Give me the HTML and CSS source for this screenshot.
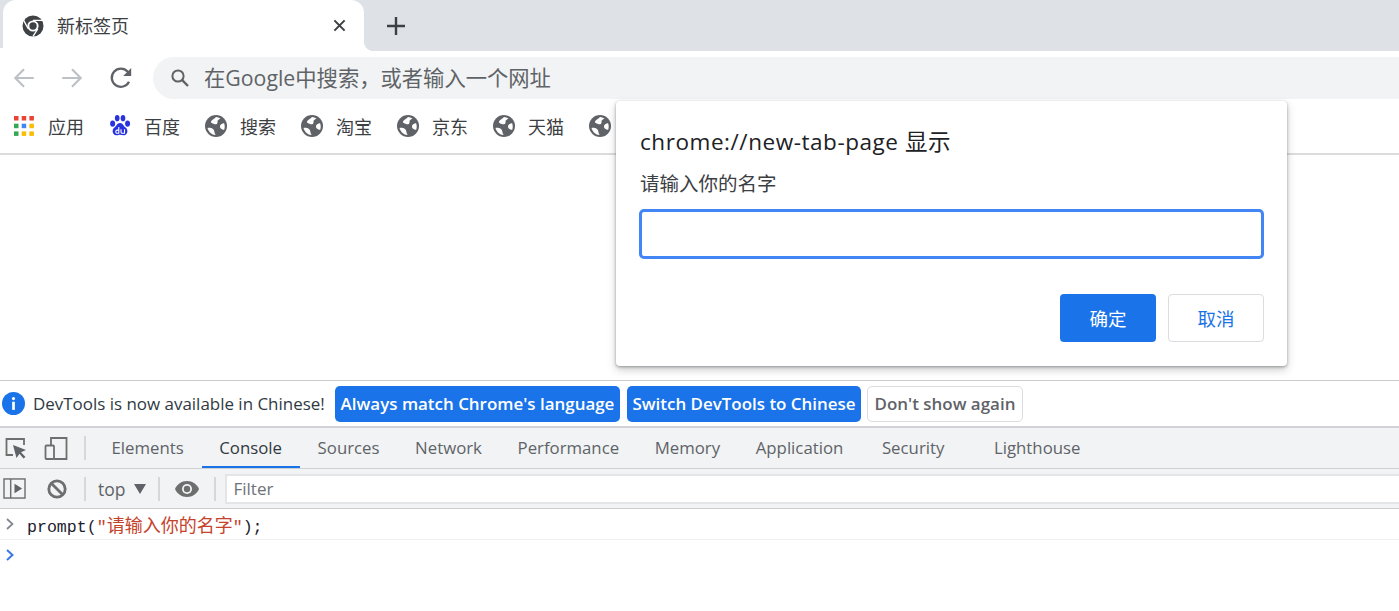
FILE: index.html
```html
<!DOCTYPE html>
<html lang="zh">
<head>
<meta charset="utf-8">
<title>新标签页</title>
<link rel="stylesheet" href="styles.css">
</head>
<body>
<div class="browser">
  <header class="tabstrip">
    <div class="tab">
      <svg class="tab-icon" viewBox="0 0 22 22"><circle cx="11" cy="11" r="10.5" fill="#3f4245"/><circle cx="11" cy="11" r="5.6" fill="#fff"/><circle cx="11" cy="11" r="3.7" fill="#3f4245"/><path d="M11 5.4H20.2M6.2 13.8 1.8 5.6M15.8 13.8 11 21.4" stroke="#fff" stroke-width="1.3" fill="none"/></svg>
      <span class="tab-title">新标签页</span>
      <svg class="tab-close" viewBox="0 0 14 14"><path d="M1.5 1.5 12.5 12.5M12.5 1.5 1.5 12.5" stroke="#3c4043" stroke-width="2.2" fill="none"/></svg>
    </div>
    <svg class="new-tab" viewBox="0 0 18 18"><path d="M9 0V18M0 9H18" stroke="#3c4043" stroke-width="2.4" fill="none"/></svg>
  </header>

  <div class="toolbar">
    <svg class="nav-icon" viewBox="0 0 24 24"><path d="M21 12H4M12 4 4 12 12 20" stroke="#bdc1c6" stroke-width="2" fill="none"/></svg>
    <svg class="nav-icon" viewBox="0 0 24 24"><path d="M3 12H20M12 4 20 12 12 20" stroke="#bdc1c6" stroke-width="2" fill="none"/></svg>
    <svg class="nav-icon nav-reload" viewBox="0 0 24 24"><path d="M19.400 15.500A8.400 8.400 0 1 1 18.200 6.200L20.600 8.600" stroke="#5f6368" stroke-width="2.100" fill="none"/><path d="M21.400 2.800V10.200H14Z" fill="#5f6368"/></svg>
    <div class="omnibox">
      <svg class="search-icon" viewBox="0 0 20 20"><circle cx="8" cy="8" r="5.6" stroke="#5f6368" stroke-width="2" fill="none"/><path d="M12.2 12.2 18 18" stroke="#5f6368" stroke-width="2.4" fill="none"/></svg>
      <span class="omni-text">在Google中搜索，或者输入一个网址</span>
    </div>
  </div>

  <nav class="bookmarks">
    <div class="bookmark bookmark-apps">
      <svg class="bm-icon" viewBox="0 0 20 20">
        <rect x="0" y="0" width="4.5" height="4.5" fill="#ea4335"/><rect x="7.7" y="0" width="4.5" height="4.5" fill="#ea4335"/><rect x="15.4" y="0" width="4.5" height="4.5" fill="#ea4335"/>
        <rect x="0" y="7.7" width="4.5" height="4.5" fill="#34a853"/><rect x="7.7" y="7.7" width="4.5" height="4.5" fill="#4285f4"/><rect x="15.4" y="7.7" width="4.5" height="4.5" fill="#fbbc04"/>
        <rect x="0" y="15.4" width="4.5" height="4.5" fill="#34a853"/><rect x="7.7" y="15.4" width="4.5" height="4.5" fill="#fbbc04"/><rect x="15.4" y="15.4" width="4.5" height="4.5" fill="#fbbc04"/>
      </svg>
      <span>应用</span>
    </div>
    <div class="bookmark bookmark-baidu">
      <svg class="bm-icon" viewBox="0 0 20 22">
        <ellipse cx="2.6" cy="8.6" rx="2.5" ry="3.2" fill="#2932e1"/><ellipse cx="7.2" cy="3.2" rx="2.3" ry="3.1" fill="#2932e1"/><ellipse cx="13" cy="3.2" rx="2.3" ry="3.1" fill="#2932e1"/><ellipse cx="17.6" cy="8.6" rx="2.5" ry="3.2" fill="#2932e1"/>
        <path d="M10 8C7 8 6.6 11 4.4 12.6 2 14.400 1.800 19.500 5.800 20.200 7.700 20.500 8.500 19.800 10 19.800 11.500 19.800 12.500 20.500 14.400 20.200 18.400 19.500 18 14.400 15.600 12.600 13.400 11 13 8 10 8Z" fill="#2932e1"/>
        <path d="M8.800 12V18.400M8.800 15.100H7.200Q5.800 15.100 5.800 16.700T7.200 18.300H8.800M11 14.200V17Q11 18.300 12.400 18.300H14.500V14.200" stroke="#fff" stroke-width="1.100" fill="none"/>
      </svg>
      <span>百度</span>
    </div>
    <div class="bookmark">
      <svg class="bm-icon" viewBox="0 0 22 22"><use href="#globe"/></svg>
      <span>搜索</span>
    </div>
    <div class="bookmark">
      <svg class="bm-icon" viewBox="0 0 22 22"><use href="#globe"/></svg>
      <span>淘宝</span>
    </div>
    <div class="bookmark">
      <svg class="bm-icon" viewBox="0 0 22 22"><use href="#globe"/></svg>
      <span>京东</span>
    </div>
    <div class="bookmark">
      <svg class="bm-icon" viewBox="0 0 22 22"><use href="#globe"/></svg>
      <span>天猫</span>
    </div>
    <div class="bookmark">
      <svg class="bm-icon" viewBox="0 0 22 22"><use href="#globe"/></svg>
    </div>
  </nav>

  <main class="page"></main>

  <section class="devtools">
    <div class="infobar">
      <svg class="info-icon" viewBox="0 0 22 22"><circle cx="11" cy="11" r="11" fill="#1a73e8"/><circle cx="11" cy="6.300" r="1.500" fill="#fff"/><rect x="9.700" y="9.300" width="2.600" height="7.800" fill="#fff"/></svg>
      <span class="info-text">DevTools is now available in Chinese!</span>
      <button class="dt-btn dt-primary dt-match">Always match Chrome's language</button>
      <button class="dt-btn dt-primary dt-switch">Switch DevTools to Chinese</button>
      <button class="dt-btn dt-plain">Don't show again</button>
    </div>

    <div class="dt-tabs">
      <svg class="dt-tool" viewBox="0 0 22 22"><path d="M8 18H1.500V2H19V8" stroke="#6e6e6e" stroke-width="1.800" fill="none"/><path d="M8 8 21 13 16 15.200 20.500 20 18.500 21.500 14.500 16.800 11.500 21Z" fill="#5f6368"/></svg>
      <svg class="dt-tool dt-device" viewBox="0 0 24 24"><path d="M7 9V2H22.500V23H10" stroke="#6e6e6e" stroke-width="1.800" fill="none"/><rect x="1.500" y="9.500" width="8.500" height="13.500" rx="1" stroke="#6e6e6e" stroke-width="1.800" fill="none"/></svg>
      <span class="dt-sep dt-sep-tabs"></span>
      <span class="dt-tab">Elements</span>
      <span class="dt-tab dt-tab-active">Console</span>
      <span class="dt-tab">Sources</span>
      <span class="dt-tab">Network</span>
      <span class="dt-tab">Performance</span>
      <span class="dt-tab">Memory</span>
      <span class="dt-tab">Application</span>
      <span class="dt-tab dt-tab-sec">Security</span>
      <span class="dt-tab dt-tab-last">Lighthouse</span>
    </div>

    <div class="con-bar">
      <svg class="con-side" viewBox="0 0 24 22"><rect x="1" y="1" width="22" height="20" stroke="#6e6e6e" stroke-width="1.500" fill="none"/><path d="M8 1V21" stroke="#6e6e6e" stroke-width="1.500"/><path d="M12 6 20 11 12 16Z" fill="#5f6368"/></svg>
      <svg class="con-clear" viewBox="0 0 20 20"><circle cx="10" cy="10" r="8.200" stroke="#6e6e6e" stroke-width="2.800" fill="none"/><path d="M4.200 4.200 15.800 15.800" stroke="#6e6e6e" stroke-width="2.800"/></svg>
      <span class="dt-sep"></span>
      <span class="con-top">top</span>
      <span class="con-caret"></span>
      <span class="dt-sep"></span>
      <svg class="con-eye" viewBox="0 0 24 16"><path d="M12 0C6.500 0 2 3.300 0 8 2 12.700 6.500 16 12 16S22 12.700 24 8C22 3.300 17.500 0 12 0Z" fill="#6e6e6e"/><circle cx="12" cy="8" r="5" fill="#f1f3f4"/><circle cx="12" cy="8" r="3.200" fill="#6e6e6e"/></svg>
      <span class="dt-sep dt-sep-filter"></span>
      <div class="con-filter">Filter</div>
    </div>

    <div class="con-log">
      <div class="con-row">
        <svg class="chev" viewBox="0 0 8 12"><path d="M1 1 6.500 6 1 11" stroke="#80868b" stroke-width="1.700" fill="none"/></svg>
        <code class="con-code">prompt(<span class="con-str">"<span class="con-cjk">请输入你的名字</span>"</span>);</code>
      </div>
      <div class="con-input">
        <svg class="chev" viewBox="0 0 8 12"><path d="M1 1 6.500 6 1 11" stroke="#3b78e7" stroke-width="2" fill="none"/></svg>
      </div>
    </div>
  </section>

  <div class="dialog" role="dialog">
    <h1 class="dlg-title">chrome://new-tab-page 显示</h1>
    <p class="dlg-msg">请输入你的名字</p>
    <div class="dlg-input"></div>
    <div class="dlg-actions">
      <button class="dlg-btn dlg-ok">确定</button>
      <button class="dlg-btn dlg-cancel">取消</button>
    </div>
  </div>
</div>

<svg class="defs" width="0" height="0">
  <symbol id="globe" viewBox="0 0 22 22">
    <circle cx="11" cy="11" r="11" fill="#5f6368"/>
    <path d="M11 2C9.500 4 7 4.500 6 6.500 5.500 8 7.500 8.300 9 9 10.500 9.800 13 9.200 12.500 6.500 12.300 5 14.500 4.200 15.500 3.500 14 2.500 12.500 2 11 2ZM2.500 13C4.500 12.500 6.500 12.800 8 14 9.500 15.300 9.300 17 9.800 18.500 10 19.300 10.500 19.800 11 20 7 20.200 3.700 17 2.500 13ZM19 8C19.900 10.200 20 12.500 19.200 14.800 18 14.600 16.700 14.500 15.800 13.500 14.900 12.400 14.700 11 15.500 10 16.300 9 17.700 8.500 19 8Z" fill="#fff"/>
  </symbol>
</svg>
</body>
</html>
```
FILE: styles.css
```css
* { box-sizing: border-box; }
html, body { margin: 0; height: 100%; overflow: hidden; background: #fff; }
body { font-family: "Open Sans", "Noto Sans CJK SC", sans-serif; color: #3c4043; }
.defs { position: absolute; }
.browser { position: relative; display: flex; flex-direction: column; height: 611px; width: 1399px; overflow: hidden; }

/* tab strip */
.tabstrip { flex: none; height: 51px; background: #dee1e6; display: flex; align-items: center; }
.tab { position: relative; align-self: flex-end; width: 361px; height: 51px; margin-left: 3px; background: #fff; border-radius: 13px 13px 0 0; display: flex; align-items: center; padding: 0 16px 0 19px; }
.tab::before, .tab::after { content: ""; position: absolute; bottom: 0; width: 10px; height: 10px; }
.tab::after { right: -10px; background: radial-gradient(circle at 100% 0, transparent 10px, #fff 10.500px); }
.tab::before { left: -3px; width: 3px; height: 3px; background: #fff; }
.tab-icon { width: 22px; height: 22px; flex: none; }
.tab-title { margin: -2px 0 0 13px; font-size: 18px; line-height: 1; font-family: "Noto Sans CJK SC", sans-serif; color: #3c4043; }
.tab-close { width: 13px; height: 13px; margin-left: auto; margin-right: 2px; }
.new-tab { width: 18px; height: 18px; margin-left: 23px; }

/* toolbar */
.toolbar { flex: none; height: 51px; background: #fff; display: flex; align-items: center; padding: 2px 0 0 11px; }
.nav-icon { width: 26px; height: 26px; margin-right: 22px; flex: none; }
.nav-reload { margin-left: 1px; margin-right: 19px; }
.omnibox { flex: 1; height: 42px; margin-right: -30px; background: #f1f3f4; border-radius: 21px; display: flex; align-items: center; padding-left: 17px; }
.search-icon { width: 20px; height: 20px; flex: none; }
.omni-text { margin-left: 14px; font-size: 21.300px; line-height: 1; color: #5f6368; font-family: "Open Sans", "Noto Sans CJK SC", sans-serif; }

/* bookmarks */
.bookmarks { flex: none; height: 53px; background: #fff; border-bottom: 2px solid #dcdcdc; display: flex; align-items: center; padding: 0 0 4px 14px; }
.bookmark { display: flex; align-items: center; width: 96px; font-size: 18px; line-height: 1; color: #3c4043; font-family: "Noto Sans CJK SC", sans-serif; }
.bookmark span { margin-left: 13px; }
.bm-icon { width: 22px; height: 22px; flex: none; }
.bookmark-apps { width: 96px; }
.bookmark-apps .bm-icon { width: 20px; height: 20px; }
.bookmark-apps span { margin-left: 14px; }
.bookmark-baidu { width: 95px; }
.bookmark-baidu .bm-icon { width: 20px; height: 22px; }
.bookmark-baidu span { margin-left: 14px; }

.page { flex: 1; background: #fff; }

/* dialog */
.dialog { position: absolute; left: 616px; top: 101px; width: 671px; height: 265px; background: #fff; border-radius: 4px; box-shadow: 0 1px 3px rgba(60,64,67,.45), 0 4px 8px rgba(60,64,67,.25); padding: 24px 23px 24px 23px; display: flex; flex-direction: column; }
.dlg-title { margin: 0 0 0 1px; font-size: 22.500px; letter-spacing: .55px; font-weight: 400; line-height: 34px; color: #202124; }
.dlg-msg { margin: 10px 0 0 1px; font-size: 19.500px; line-height: 28px; color: #3c4043; font-family: "Noto Sans CJK SC", sans-serif; }
.dlg-input { height: 50px; margin-top: 12px; border: 3px solid #4285f4; border-radius: 5px; }
.dlg-actions { display: flex; justify-content: flex-end; gap: 12px; margin-top: 35px; }
.dlg-btn { width: 96px; height: 48px; border-radius: 4px; font-size: 18.500px; font-family: "Noto Sans CJK SC", sans-serif; padding: 0; }
.dlg-ok { background: #1a73e8; color: #fff; border: 0; }
.dlg-cancel { background: #fff; color: #1a73e8; border: 1px solid #dadce0; }

/* devtools */
.devtools { flex: none; height: 231px; display: flex; flex-direction: column; font-size: 18px; }
.infobar { flex: none; height: 48px; border-top: 1px solid #ccc; border-bottom: 2px solid #d0d2d5; display: flex; align-items: center; padding-left: 2px; }
.info-icon { width: 23px; height: 23px; flex: none; }
.info-text { margin-left: 8px; font-size: 16.950px; color: #303942; white-space: nowrap; width: 302px; }
.dt-btn { height: 36px; border-radius: 5px; font: 600 16.950px "Open Sans", sans-serif; padding: 0; white-space: nowrap; margin-right: 6px; }
.dt-primary { background: #1a73e8; color: #fff; border: 0; }
.dt-match { width: 285px; margin-right: 7px; }
.dt-switch { width: 234px; }
.dt-plain { width: 156px; background: #fff; color: #5f6368; border: 1px solid #dadce0; }

.dt-tabs { flex: none; height: 41px; background: #f1f3f4; border-bottom: 1px solid #cdcfd2; display: flex; align-items: center; position: relative; padding-left: 5px; }
.dt-tool { width: 22px; height: 22px; flex: none; }
.dt-device { width: 24px; height: 24px; margin-left: 17px; }
.dt-sep { width: 2px; height: 24px; background: #d5d7da; flex: none; }
.dt-sep-tabs { margin-left: 16px; margin-right: 7.700px; }
.dt-tab { flex: none; height: 40px; line-height: 40px; padding: 0 17.800px; font-size: 16.800px; color: #5f6368; }
.dt-tab-active { color: #303942; box-shadow: inset 0 -2px 0 #1a73e8; }
.dt-tab-sec { margin-left: 3px; }
.dt-tab-last { margin-left: 14px; }

.con-bar { flex: none; height: 40px; background: #f1f3f4; border-bottom: 1px solid #cdcfd2; display: flex; align-items: center; padding: 0 0 0 3px; }
.con-side { width: 23px; height: 21px; flex: none; }
.con-clear { width: 20px; height: 20px; margin-left: 21px; margin-right: 17px; flex: none; }
.con-top { margin-left: 12px; font-size: 17.500px; color: #5f6368; }
.con-caret { width: 0; height: 0; margin-left: 9px; margin-right: 12px; border-left: 6px solid transparent; border-right: 6px solid transparent; border-top: 10px solid #5f6368; }
.con-eye { width: 24px; height: 16px; margin-left: 15px; margin-right: 15px; flex: none; }
.dt-sep-filter { margin-right: 9px; }
.con-filter { flex: 1; height: 30px; background: #fff; border: 1px solid #e4e5e7; border-width: 2px 0 2px 2px; padding-left: 6px; line-height: 26px; font-size: 17px; color: #6e7175; }

.con-log { flex: 1; background: #fff; }
.con-row { height: 31px; border-bottom: 1px solid #f0f0f0; display: flex; align-items: center; padding-left: 6px; }
.chev { width: 8px; height: 12px; flex: none; }
.con-code { margin-left: 13px; font: 16.600px "Liberation Mono", "Noto Sans CJK SC", monospace; color: #1c1c2e; }
.con-str { color: #c5422c; }
.con-cjk { font-size: 18px; }
.con-input { height: 30px; display: flex; align-items: center; padding-left: 6px; }
```
